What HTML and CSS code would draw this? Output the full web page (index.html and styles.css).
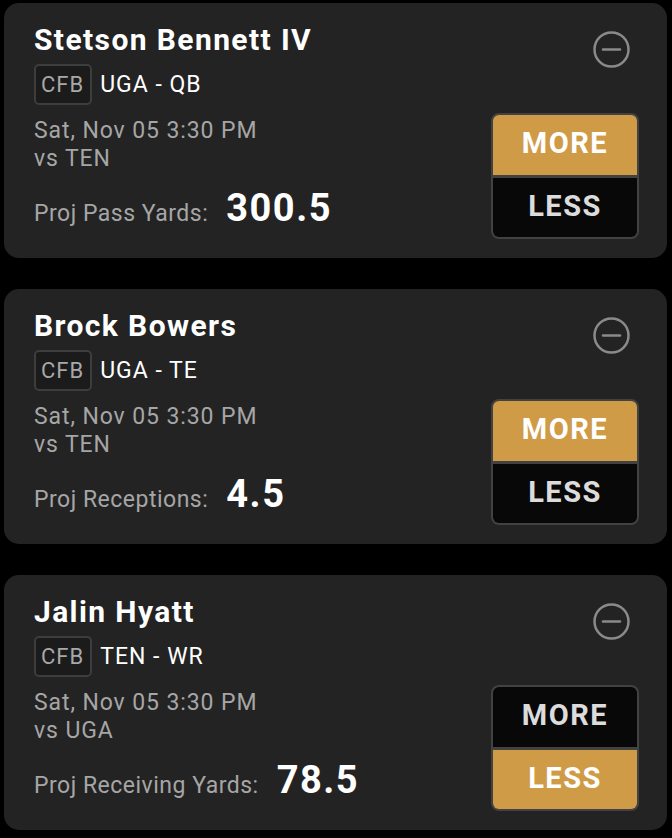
FILE: index.html
```html
<!DOCTYPE html>
<html>
<head>
<meta charset="utf-8">
<link rel="stylesheet" href="styles.css">
</head>
<body>
<div class="list">
  <div class="card">
    <div class="info">
      <div class="name">Stetson Bennett IV</div>
      <div class="meta"><span class="badge">CFB</span><span class="team">UGA - QB</span></div>
      <div class="when">Sat, Nov 05 3:30 PM<br>vs TEN</div>
      <div class="proj"><span class="label">Proj Pass Yards:</span><span class="val">300.5</span></div>
    </div>
    <div class="side">
      <svg class="remove" width="37" height="37" viewBox="0 0 37 37"><circle cx="18.5" cy="18.5" r="17" fill="none" stroke="#8a8a8a" stroke-width="2.5"/><line x1="10" y1="18.5" x2="27" y2="18.5" stroke="#8a8a8a" stroke-width="2.5" stroke-linecap="round"/></svg>
      <div class="pick">
        <div class="opt sel">MORE</div>
        <div class="opt">LESS</div>
      </div>
    </div>
  </div>
  <div class="card">
    <div class="info">
      <div class="name">Brock Bowers</div>
      <div class="meta"><span class="badge">CFB</span><span class="team">UGA - TE</span></div>
      <div class="when">Sat, Nov 05 3:30 PM<br>vs TEN</div>
      <div class="proj"><span class="label">Proj Receptions:</span><span class="val">4.5</span></div>
    </div>
    <div class="side">
      <svg class="remove" width="37" height="37" viewBox="0 0 37 37"><circle cx="18.5" cy="18.5" r="17" fill="none" stroke="#8a8a8a" stroke-width="2.5"/><line x1="10" y1="18.5" x2="27" y2="18.5" stroke="#8a8a8a" stroke-width="2.5" stroke-linecap="round"/></svg>
      <div class="pick">
        <div class="opt sel">MORE</div>
        <div class="opt">LESS</div>
      </div>
    </div>
  </div>
  <div class="card">
    <div class="info">
      <div class="name">Jalin Hyatt</div>
      <div class="meta"><span class="badge">CFB</span><span class="team">TEN - WR</span></div>
      <div class="when">Sat, Nov 05 3:30 PM<br>vs UGA</div>
      <div class="proj"><span class="label">Proj Receiving Yards:</span><span class="val">78.5</span></div>
    </div>
    <div class="side">
      <svg class="remove" width="37" height="37" viewBox="0 0 37 37"><circle cx="18.5" cy="18.5" r="17" fill="none" stroke="#8a8a8a" stroke-width="2.5"/><line x1="10" y1="18.5" x2="27" y2="18.5" stroke="#8a8a8a" stroke-width="2.5" stroke-linecap="round"/></svg>
      <div class="pick">
        <div class="opt">MORE</div>
        <div class="opt sel">LESS</div>
      </div>
    </div>
  </div>
</div>
</body>
</html>
```
FILE: styles.css
```css
html, body {
  margin: 0;
  background: #000;
}
body {
  font-family: Roboto, "Liberation Sans", sans-serif;
  color: #fff;
}
.list {
  display: flex;
  flex-direction: column;
  gap: 31px;
  padding: 3px 5px 0 4px;
}
.card {
  height: 255px;
  box-sizing: border-box;
  background: #232323;
  border-radius: 15px;
  display: flex;
  justify-content: space-between;
  padding: 0 28px 19px 30px;
}
.info {
  display: flex;
  flex-direction: column;
}
.name {
  font-size: 30px;
  font-weight: 700;
  letter-spacing: 1.4px;
  line-height: 34px;
  margin-top: 20px;
}
.meta {
  display: flex;
  align-items: center;
  gap: 8px;
  margin-top: 7px;
}
.badge {
  box-sizing: border-box;
  height: 41px;
  padding: 0 6px 0 5px;
  display: flex;
  align-items: center;
  border: 2px solid #3d3d3d;
  border-radius: 5px;
  background: #1b1b1b;
  color: #a8a8a8;
  font-size: 22px;
  letter-spacing: 1px;
}
.team {
  font-size: 23px;
  letter-spacing: 1px;
}
.when {
  color: #a6a6a6;
  font-size: 23px;
  letter-spacing: 0.9px;
  line-height: 28px;
  margin-top: 12px;
}
.proj {
  display: flex;
  align-items: baseline;
  gap: 18px;
  margin-top: 13px;
}
.label {
  color: #a6a6a6;
  font-size: 23px;
  letter-spacing: 0.5px;
}
.val {
  font-size: 38px;
  font-weight: 700;
  letter-spacing: 1.5px;
}
.side {
  display: flex;
  flex-direction: column;
  align-items: flex-end;
  justify-content: space-between;
}
.remove {
  margin-top: 28px;
  margin-right: 9px;
}
.pick {
  width: 148px;
  height: 126px;
  box-sizing: border-box;
  border: 2px solid #424242;
  border-radius: 8px;
  overflow: hidden;
  display: flex;
  flex-direction: column;
  gap: 3px;
  background: #424242;
}
.opt {
  flex: 1;
  display: flex;
  align-items: center;
  justify-content: center;
  padding-bottom: 3px;
  background: #080808;
  color: #dcdcdc;
  font-size: 29px;
  font-weight: 700;
  letter-spacing: 1.5px;
}
.opt.sel {
  background: #cf9b46;
  color: #fff;
}
```
